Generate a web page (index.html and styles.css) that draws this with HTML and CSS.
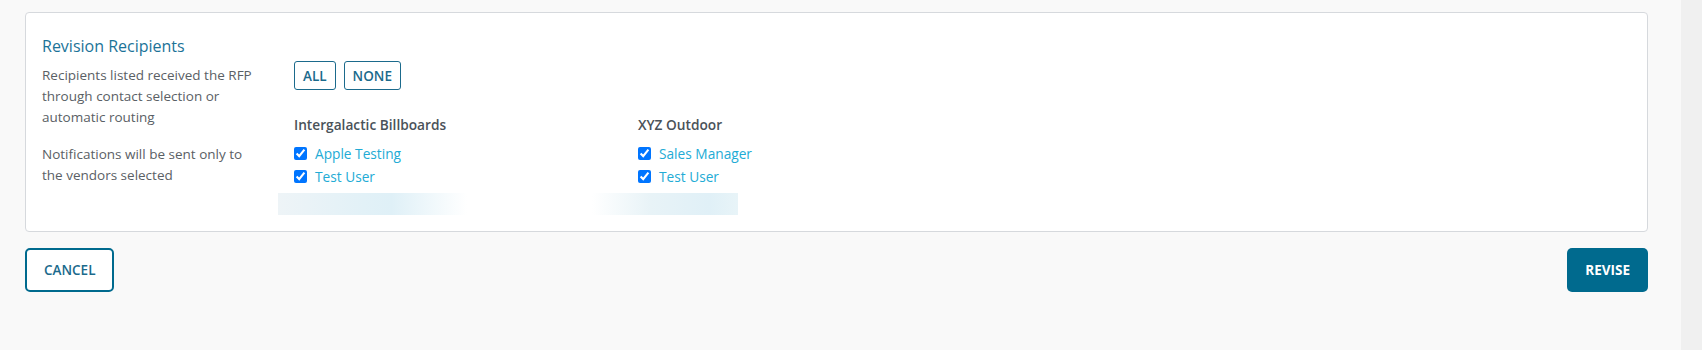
FILE: index.html
```html
<!DOCTYPE html>
<html lang="en">
<head>
<meta charset="utf-8">
<title>Revision Recipients</title>
<link rel="stylesheet" href="styles.css">
</head>
<body>
<div class="page">
  <main class="main">
    <section class="card">
      <h2 class="title">Revision Recipients</h2>
      <div class="body">
        <div class="desc">
          <p>Recipients listed received the RFP through contact selection or automatic routing</p>
          <p>Notifications will be sent only to the vendors selected</p>
        </div>
        <div class="recipients">
          <div class="toggle">
            <button class="btn-small">ALL</button>
            <button class="btn-small">NONE</button>
          </div>
          <div class="vendors">
            <div class="vendor">
              <div class="vendor-name">Intergalactic Billboards</div>
              <label class="contact"><input type="checkbox" checked><span>Apple Testing</span></label>
              <label class="contact"><input type="checkbox" checked><span>Test User</span></label>
            </div>
            <div class="vendor">
              <div class="vendor-name">XYZ Outdoor</div>
              <label class="contact"><input type="checkbox" checked><span>Sales Manager</span></label>
              <label class="contact"><input type="checkbox" checked><span>Test User</span></label>
            </div>
          </div>
          <div class="redact">
            <span class="redact-a"></span>
            <span class="redact-b"></span>
          </div>
        </div>
      </div>
    </section>
    <div class="actions">
      <button class="btn btn-outline">CANCEL</button>
      <button class="btn btn-primary">REVISE</button>
    </div>
  </main>
  <aside class="gutter"></aside>
</div>
</body>
</html>
```
FILE: styles.css
```css
html, body {
  margin: 0;
  padding: 0;
  height: 100%;
}
body {
  background: #f9f9f9;
  font-family: "Open Sans", "Liberation Sans", sans-serif;
  color: #5a6065;
}
.page {
  display: flex;
  min-height: 350px;
}
.main {
  flex: 1;
  padding: 12px 33px 0 25px;
}
.gutter {
  width: 21px;
  background: #f0f0f0;
}
.card {
  background: #fff;
  border: 1px solid #d6d9dd;
  border-radius: 4px;
  padding: 22px 16px 16px 16px;
}
.title {
  margin: 0;
  font-size: 16px;
  line-height: 22px;
  font-weight: 400;
  color: #1b7398;
}
.body {
  display: flex;
  margin-top: 4px;
}
.desc {
  width: 220px;
  margin-right: 32px;
  padding-top: 4px;
  font-size: 13.5px;
  line-height: 21px;
  color: #5a6065;
}
.desc p {
  margin: 0 0 16px 0;
}
.toggle {
  display: flex;
  gap: 8px;
}
.btn-small {
  font-family: inherit;
  font-size: 13.5px;
  font-weight: 600;
  color: #1b6a8c;
  background: #fff;
  border: 1px solid #1b6a8c;
  border-radius: 3px;
  height: 29px;
  padding: 0 8px;
  cursor: pointer;
}
.vendors {
  display: flex;
  margin-top: 25px;
}
.vendor {
  width: 344px;
}
.vendor-name {
  font-size: 13.7px;
  font-weight: 600;
  line-height: 20px;
  color: #4a5259;
  margin-bottom: 7px;
}
.contact {
  display: flex;
  align-items: center;
  height: 23px;
  font-size: 13.7px;
  color: #22abd5;
}
.contact input {
  width: 13px;
  height: 13px;
  margin: 0 8px 0 0;
}
.redact {
  display: flex;
  margin-top: 5px;
  height: 22px;
}
.redact-a {
  width: 189px;
  margin-left: -16px;
  background: linear-gradient(90deg, #eef4f7 0%, #e2f1f7 45%, #dff0f7 60%, #ffffff 100%);
}
.redact-b {
  width: 146px;
  margin-left: 125px;
  background: linear-gradient(90deg, #ffffff 0%, #e8f3f7 40%, #e0f0f7 80%, #e8f4f8 100%);
}
.actions {
  display: flex;
  justify-content: space-between;
  margin-top: 16px;
}
.btn {
  font-family: inherit;
  font-size: 13.5px;
  height: 44px;
  border-radius: 5px;
  cursor: pointer;
}
.btn-outline {
  background: #fff;
  color: #1b6a8c;
  font-weight: 600;
  border: 2px solid #006a8e;
  padding: 0 17px;
}
.btn-primary {
  background: #006a8e;
  color: #fff;
  font-weight: 700;
  border: none;
  padding: 0 18px;
}
```
